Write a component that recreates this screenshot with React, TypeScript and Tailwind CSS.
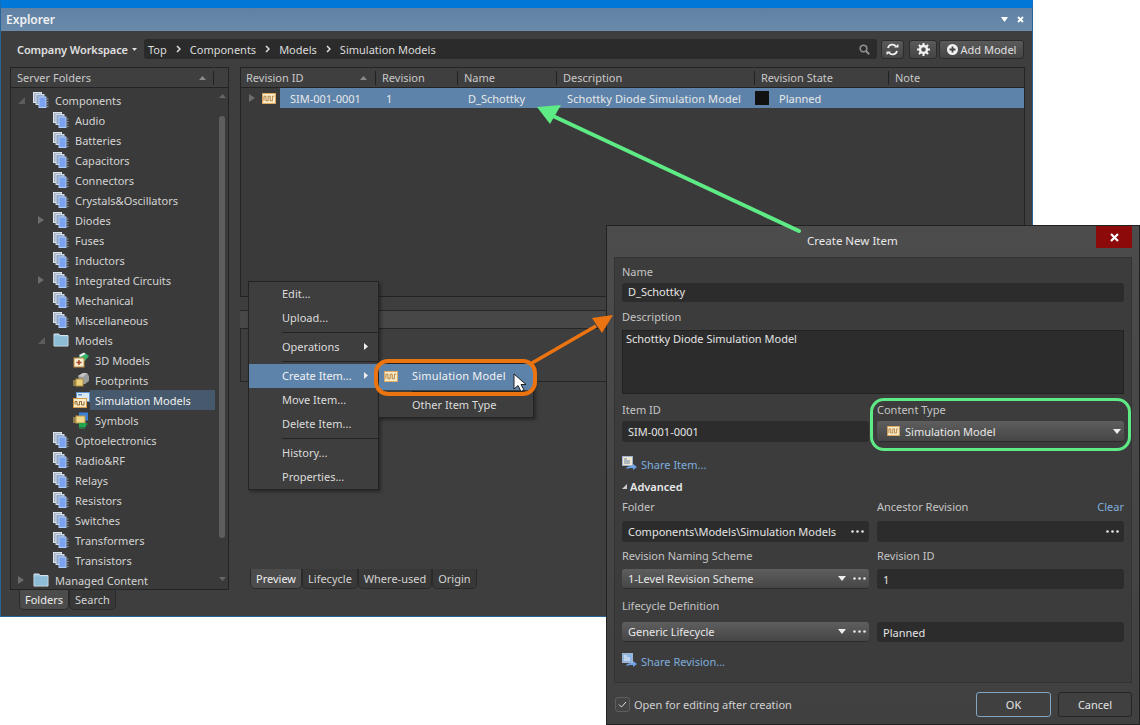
import React from "react";

const font = { fontFamily: '"Noto Sans", "Open Sans", sans-serif' };

function StackIcon() {
  return (
    <svg width="16" height="16" viewBox="0 0 16 16" className="shrink-0">
      <rect x="0.5" y="0.5" width="8" height="10" fill="#a9b6c6" stroke="#dfe6ee" strokeWidth="1" />
      <rect x="3" y="2.500" width="8" height="10" fill="#93a8c4" stroke="#d2dcea" strokeWidth="1" />
      <rect x="6" y="5" width="7" height="10.500" fill="#7aa2ee" stroke="#b4ccf5" strokeWidth="1" />
      <path d="M13.800 7h1.700M13.800 9.500h1.700M13.800 12h1.700M13.800 14.500h1.700" stroke="#8f9aa5" strokeWidth="1" />
    </svg>
  );
}

function FolderIcon() {
  return (
    <svg width="16" height="14" viewBox="0 0 16 14" className="shrink-0">
      <path d="M1 1h5l1 1.500h8V13H1z" fill="#9cc6dc" stroke="#d4e4ec" strokeWidth="1" />
      <rect x="1.500" y="3.500" width="13" height="9" fill="#8dbcd6" />
    </svg>
  );
}

function WaveIcon({ size = 15 }: { size?: number }) {
  return (
    <svg width={size} height={Math.round((size * 12) / 15)} viewBox="0 0 15 12" className="shrink-0">
      <rect x="0.5" y="0.5" width="14" height="11" fill="#f9ebc8" stroke="#e3ab5c" strokeWidth="1" />
      <path d="M2 8.500V3.500h2.200V8.500h2.400V3.500h2.200V8.500h2.400V3.500H13" fill="none" stroke="#a8702e" strokeWidth="0.9" />
    </svg>
  );
}

function ThreeDIcon() {
  return (
    <svg width="17" height="16" viewBox="0 0 17 16" className="shrink-0">
      <path d="M5 5l7-4 4 3-5 6z" fill="#35b56b" />
      <path d="M6 3l5-2.500 1.500 1.500-5 3z" fill="#e8f4ec" />
      <rect x="1" y="6" width="10" height="9" fill="#f6edd4" stroke="#c08a3c" strokeWidth="1" />
      <path d="M6 8v5M3.500 10.500h5" stroke="#a0431c" strokeWidth="1.400" />
    </svg>
  );
}

function FootprintIcon() {
  return (
    <svg width="17" height="16" viewBox="0 0 17 16" className="shrink-0">
      <path d="M5 4l5-3h4l2 3v5l-4 3H7z" fill="#9a9d9c" />
      <path d="M5 4l5-3h4l-4 4z" fill="#c4c7c6" />
      <rect x="3" y="7" width="7" height="7" fill="#e9cf7e" stroke="#b08e3a" strokeWidth="1" />
      <path d="M0 9h3M0 11h3M0 13h3" stroke="#e0b95c" strokeWidth="1" />
    </svg>
  );
}

function SimIcon() {
  return (
    <svg width="17" height="17" viewBox="0 0 17 17" className="shrink-0">
      <rect x="3.500" y="0.5" width="13" height="9" fill="#dbe9f6" stroke="#5f94cc" strokeWidth="1" />
      <rect x="5" y="2" width="4" height="1.500" fill="#5f94cc" />
      <rect x="0.5" y="6.500" width="13" height="9" fill="#f9ebc8" stroke="#d79a45" strokeWidth="1" />
      <path d="M2 12.500V9.500h2v3.500h2.500V9.500h2v3.500h2.500V9.500" fill="none" stroke="#8a5a25" strokeWidth="0.9" />
    </svg>
  );
}

function SymbolIcon() {
  return (
    <svg width="17" height="17" viewBox="0 0 17 17" className="shrink-0">
      <rect x="6" y="0.5" width="9" height="8" fill="#3b83d8" />
      <rect x="3" y="4" width="9" height="7" fill="#f0d98c" stroke="#b79a4a" strokeWidth="1" />
      <path d="M0 6h3M0 8h3M0 10h3" stroke="#e0b95c" strokeWidth="1" />
      <rect x="6" y="11" width="7" height="4" fill="#21a54f" />
      <path d="M7 15v2M9 15v2M11 15v2M13 12h2" stroke="#21a54f" strokeWidth="1" />
    </svg>
  );
}

function Tri({ open }: { open?: boolean }) {
  return open ? (
    <svg width="7" height="7" viewBox="0 0 7 7"><path d="M7 0v7H0z" fill="#5c5c5c" /></svg>
  ) : (
    <svg width="6" height="8" viewBox="0 0 6 8"><path d="M0 0l6 4-6 4z" fill="#6c6c6c" /></svg>
  );
}

type Row = { t: string; lvl: number; icon: React.ReactNode; arrow?: "open" | "closed"; sel?: boolean };

const s = <StackIcon />;
const rows: Row[] = [
  { t: "Components", lvl: 0, icon: s, arrow: "open" },
  { t: "Audio", lvl: 1, icon: s },
  { t: "Batteries", lvl: 1, icon: s },
  { t: "Capacitors", lvl: 1, icon: s },
  { t: "Connectors", lvl: 1, icon: s },
  { t: "Crystals&Oscillators", lvl: 1, icon: s },
  { t: "Diodes", lvl: 1, icon: s, arrow: "closed" },
  { t: "Fuses", lvl: 1, icon: s },
  { t: "Inductors", lvl: 1, icon: s },
  { t: "Integrated Circuits", lvl: 1, icon: s, arrow: "closed" },
  { t: "Mechanical", lvl: 1, icon: s },
  { t: "Miscellaneous", lvl: 1, icon: s },
  { t: "Models", lvl: 1, icon: <FolderIcon />, arrow: "open" },
  { t: "3D Models", lvl: 2, icon: <ThreeDIcon /> },
  { t: "Footprints", lvl: 2, icon: <FootprintIcon /> },
  { t: "Simulation Models", lvl: 2, icon: <SimIcon />, sel: true },
  { t: "Symbols", lvl: 2, icon: <SymbolIcon /> },
  { t: "Optoelectronics", lvl: 1, icon: s },
  { t: "Radio&RF", lvl: 1, icon: s },
  { t: "Relays", lvl: 1, icon: s },
  { t: "Resistors", lvl: 1, icon: s },
  { t: "Switches", lvl: 1, icon: s },
  { t: "Transformers", lvl: 1, icon: s },
  { t: "Transistors", lvl: 1, icon: s },
  { t: "Managed Content", lvl: 0, icon: <FolderIcon />, arrow: "closed" },
];

const indentClass = ["pl-[7px]", "pl-[27px]", "pl-[47px]"];

function TreeRow({ r }: { r: Row }) {
  return (
    <div className={`flex h-5 items-center ${indentClass[r.lvl]}`}>
      <span className="flex w-[15px] shrink-0 items-center">
        {r.arrow ? <Tri open={r.arrow === "open"} /> : null}
      </span>
      <span className="flex w-[17px] shrink-0 items-center justify-start">{r.icon}</span>
      <span
        className={`flex h-5 items-center whitespace-nowrap pl-[5px] pr-[24px] ${
          r.sel ? "bg-[#47596c] text-[#f0f0f0]" : "text-[#d4d4d4]"
        }`}
      >
        {r.t}
      </span>
    </div>
  );
}

function HeadCell({ w, t, sort }: { w: string; t: string; sort?: boolean }) {
  return (
    <div className={`flex h-[14px] items-center justify-between border-r border-[#222] pr-[8px] ${sort ? "pl-[5px]" : "pl-[6px]"} ${w}`}>
      <span>{t}</span>
      {sort ? (
        <svg width="7" height="4" viewBox="0 0 7 4"><path d="M0 4l3.500-4L7 4z" fill="#8a8a8a" /></svg>
      ) : null}
    </div>
  );
}

function Btn({ className, children }: { className: string; children: React.ReactNode }) {
  return (
    <div
      className={`flex h-[19px] items-center justify-center rounded-[3px] border border-[#2c2c2c] bg-gradient-to-b from-[#5a5a5a] to-[#454545] text-[#e0e0e0] ${className}`}
    >
      {children}
    </div>
  );
}

function Chevron() {
  return (
    <svg width="5" height="8" viewBox="0 0 5 8" className="mx-[9px] shrink-0">
      <path d="M1 1l3 3-3 3" fill="none" stroke="#e0e0e0" strokeWidth="1.500" />
    </svg>
  );
}

function Field({ children, className = "" }: { children?: React.ReactNode; className?: string }) {
  return (
    <div className={`flex items-center rounded-[3px] bg-[#2c2c2c] pl-[6px] pr-[6px] text-[#e4e4e4] ${className}`}>
      {children}
    </div>
  );
}

function Dots() {
  return (
    <svg width="13" height="3" viewBox="0 0 13 3" className="shrink-0">
      <circle cx="1.500" cy="1.500" r="1.300" fill="#e4e4e4" />
      <circle cx="6.500" cy="1.500" r="1.300" fill="#e4e4e4" />
      <circle cx="11.500" cy="1.500" r="1.300" fill="#e4e4e4" />
    </svg>
  );
}

function Caret() {
  return (
    <svg width="8" height="5" viewBox="0 0 8 5" className="shrink-0">
      <path d="M0 0h8L4 5z" fill="#eeeeee" />
    </svg>
  );
}

function Select({ children, dots, className = "h-[20px] pl-[6px]" }: { children: React.ReactNode; dots?: boolean; className?: string }) {
  return (
    <div className={`flex items-center rounded-[3px] border-b border-[#2c2c2c] bg-gradient-to-b from-[#5e5e5e] to-[#464646] pr-[3px] text-[#e8e8e8] ${className}`}>
      <div className="flex flex-1 items-center">{children}</div>
      <Caret />
      {dots ? <span className="ml-[7px] flex"><Dots /></span> : null}
    </div>
  );
}

function Label({ children }: { children: React.ReactNode }) {
  return <div className="flex h-[15px] items-center text-[#c4c4c4]">{children}</div>;
}

function ShareIcon({ alt }: { alt?: boolean }) {
  return (
    <svg width="16" height="15" viewBox="0 0 16 15" className="shrink-0">
      <rect x="0.5" y="0.5" width="10" height="9" fill={alt ? "#8fb4e6" : "#f0e8d0"} stroke="#9fb4cc" strokeWidth="1" />
      <path d="M2 3h3M2 5h6M2 7h6" stroke={alt ? "#f0f0f0" : "#6f86a8"} strokeWidth="1" />
      <path d="M4 13c1-3 4-3 7-3V8l4 3-4 3v-2c-3 0-5 0-7 1z" fill="#6fa3e6" />
    </svg>
  );
}

function Tabs({ items, className }: { items: string[]; className: string }) {
  return (
    <div className={`flex h-[20px] items-stretch ${className}`}>
      {items.map((t, i) => (
        <div
          key={t}
          className={`flex items-center rounded-b-[5px] border border-t-0 border-[#2a2a2a] px-[5px] ${
            i === 0 ? "bg-[#4c4c4c] text-[#eeeeee]" : "bg-[#383838] text-[#d4d4d4]"
          }`}
        >
          {t}
        </div>
      ))}
    </div>
  );
}

function MenuItem({ t, arrow, active }: { t: string; arrow?: boolean; active?: boolean }) {
  return (
    <div
      className={`flex h-6 items-center justify-between pb-[2px] pl-[33px] pr-[10px] ${
        active ? "bg-[#5d83aa] text-[#f2f2f2]" : "text-[#dcdcdc]"
      }`}
    >
      <span>{t}</span>
      {arrow ? (
        <svg width="4" height="7" viewBox="0 0 4 7"><path d="M0 0l4 3.500L0 7z" fill="#eeeeee" /></svg>
      ) : null}
    </div>
  );
}

function MenuSep() {
  return (
    <div className="flex h-[5px] items-center pl-[33px]">
      <div className="h-px flex-1 bg-[#232323]" />
    </div>
  );
}

export default function App() {
  return (
    <div className="relative h-[725px] w-[1140px] overflow-hidden bg-white text-[11px] leading-none" style={font}>
      {/* Explorer window */}
      <div className="flex h-[617px] w-[1033px] flex-col border-x border-b border-[#2a6496] border-t-[8px] border-t-[#0078d7] bg-[#3e3e3e]">
        <div className="flex h-[23px] shrink-0 items-center justify-between bg-gradient-to-b from-[#5f81a3] to-[#6a8aab] pl-[5px] pr-[8px]">
          <span className="text-[12px] font-semibold text-[#f2f2f2]">Explorer</span>
          <div className="flex items-center gap-[9px]">
            <svg width="7" height="5" viewBox="0 0 7 5"><path d="M0 0h7L3.500 5z" fill="#fff" /></svg>
            <svg width="7" height="7" viewBox="0 0 7 7"><path d="M1 1l5 5M6 1l-5 5" stroke="#fff" strokeWidth="1.800" /></svg>
          </div>
        </div>

        <div className="flex h-[36px] shrink-0 items-center pl-[16px] pr-[8px]">
          <span className="flex w-[127px] shrink-0 items-center gap-[4px] font-semibold tracking-[-0.1px] text-[#e0e0e0]">
            Company Workspace
            <svg width="5" height="3" viewBox="0 0 5 3"><path d="M0 0h5L2.500 3z" fill="#e0e0e0" /></svg>
          </span>
          <div className="flex h-[20px] w-[733px] shrink-0 items-center rounded-[3px] bg-[#2b2b2b] pl-[4px] pr-[7px] text-[#dcdcdc]">
            <span>Top</span>
            <Chevron />
            <span>Components</span>
            <Chevron />
            <span>Models</span>
            <Chevron />
            <span>Simulation Models</span>
            <svg width="11" height="11" viewBox="0 0 11 11" className="ml-auto">
              <circle cx="4.500" cy="4.500" r="3.300" fill="none" stroke="#8f8f8f" strokeWidth="1.600" />
              <path d="M7 7l3.200 3.200" stroke="#8f8f8f" strokeWidth="2" />
            </svg>
          </div>
          <Btn className="ml-[4px] w-[23px]">
            <svg width="13" height="13" viewBox="0 0 13 13">
              <path d="M2 5a4.500 4.500 0 0 1 8-1.500M11 8a4.500 4.500 0 0 1-8 1.500" fill="none" stroke="#f0f0f0" strokeWidth="1.800" />
              <path d="M8 4.500h4.500V1zM5 8.500H.5V12z" fill="#f0f0f0" />
            </svg>
          </Btn>
          <Btn className="ml-[5px] w-[28px]">
            <svg width="13" height="13" viewBox="0 0 13 13">
              <circle cx="6.500" cy="6.500" r="3.500" fill="none" stroke="#f4f4f4" strokeWidth="2.400" />
              <path d="M6.500 0v2.500M6.500 10.500V13M0 6.500h2.500M10.500 6.500H13M1.900 1.900l1.800 1.800M9.300 9.300l1.800 1.800M11.100 1.900 9.300 3.700M3.700 9.300l-1.800 1.800" stroke="#f4f4f4" strokeWidth="2" />
            </svg>
          </Btn>
          <Btn className="ml-[2px] w-[85px] gap-[3px]">
            <svg width="11" height="11" viewBox="0 0 11 11">
              <circle cx="5.500" cy="5.500" r="5.500" fill="#f2f2f2" />
              <path d="M5.500 2.500v6M2.500 5.500h6" stroke="#444" strokeWidth="1.800" />
            </svg>
            <span>Add Model</span>
          </Btn>
        </div>

        <div className="flex min-h-0 flex-1 pl-[9px]">
          {/* Left */}
          <div className="flex w-[219px] shrink-0 flex-col">
            <div className="flex h-[523px] flex-col border border-[#232323] bg-[#3a3a3a]">
              <div className="flex h-[20px] shrink-0 items-center justify-between border-b border-[#232323] bg-[#3f3f3f] pl-[6px] pr-[14px] text-[#c8c8c8]">
                <span>Server Folders</span>
                <div className="flex h-[14px] w-[15px] items-center justify-between">
                  <svg width="7" height="4" viewBox="0 0 7 4"><path d="M0 4l3.500-4L7 4z" fill="#8a8a8a" /></svg>
                  <span className="h-full w-px bg-[#222]" />
                </div>
              </div>
              <div className="flex min-h-0 flex-1">
                <div className="min-w-0 flex-1 overflow-hidden pt-[2px]">
                  {rows.map((r) => (
                    <TreeRow key={r.t} r={r} />
                  ))}
                </div>
                <div className="flex w-[11px] shrink-0 flex-col items-center pr-[1px] pt-[6px]">
                  <svg width="7" height="4" viewBox="0 0 7 4" className="shrink-0"><path d="M0 4l3.500-4L7 4z" fill="#666" /></svg>
                  <div className="mt-[18px] h-[422px] w-[6px] shrink-0 rounded-[3px] bg-[#5e5e5e]" />
                  <svg width="7" height="4" viewBox="0 0 7 4" className="mt-[39px] shrink-0"><path d="M0 0h7L3.500 4z" fill="#666" /></svg>
                </div>
              </div>
            </div>
            <Tabs items={["Folders", "Search"]} className="ml-[9px]" />
          </div>

          {/* Right */}
          <div className="ml-[11px] flex w-[785px] shrink-0 flex-col">
            <div className="h-[230px] shrink-0 border border-[#232323] bg-[#3a3a3a]">
              <div className="flex h-[20px] items-center border-b border-[#232323] bg-[#3f3f3f] text-[#c8c8c8]">
                <HeadCell w="w-[135px]" t="Revision ID" sort />
                <HeadCell w="w-[82px]" t="Revision" />
                <HeadCell w="w-[99px]" t="Name" />
                <HeadCell w="w-[198px]" t="Description" />
                <HeadCell w="w-[134px]" t="Revision State" />
                <div className="pl-[6px]">Note</div>
              </div>
              <div className="flex h-[20px] items-center text-[#e8e8e8]">
                <span className="flex w-[21px] shrink-0 justify-center pl-[1px]"><Tri /></span>
                <span className="flex w-[18px] shrink-0"><WaveIcon size={14} /></span>
                <div className="flex h-full flex-1 items-center bg-[#5d83aa]">
                  <span className="w-[106px] pl-[10px]">SIM-001-0001</span>
                  <span className="w-[82px]">1</span>
                  <span className="w-[99px]">D_Schottky</span>
                  <span className="w-[188px] tracking-[0.1px]">Schottky Diode Simulation Model</span>
                  <span className="h-[14px] w-[14px] bg-[#111]" />
                  <span className="ml-[10px]">Planned</span>
                </div>
              </div>
            </div>
            <div className="mt-[13px] flex h-[18px] shrink-0 border-t border-[#262626] bg-[#474747]" />
            <div className="h-[54px] shrink-0 border border-[#262626]" />
            <div className="flex-1" />
            <Tabs items={["Preview", "Lifecycle", "Where-used", "Origin"]} className="mb-[27px] ml-[10px]" />
          </div>
        </div>
      </div>

      {/* Context menu */}
      <div className="absolute left-[248px] top-[281px] w-[131px] border border-[#232323] bg-[#3e3e3e] shadow-[2px_2px_3px_rgba(0,0,0,0.35)]">
        <MenuItem t="Edit..." />
        <MenuItem t="Upload..." />
        <MenuSep />
        <MenuItem t="Operations" arrow />
        <MenuSep />
        <MenuItem t="Create Item..." arrow active />
        <MenuItem t="Move Item..." />
        <MenuItem t="Delete Item..." />
        <MenuSep />
        <MenuItem t="History..." />
        <MenuItem t="Properties..." />
      </div>

      {/* Submenu */}
      <div className="absolute left-[378px] top-[363px] w-[156px] border border-[#232323] bg-[#3e3e3e] shadow-[2px_2px_3px_rgba(0,0,0,0.35)]">
        <div className="flex h-[26px] items-center bg-[#5d83aa] pb-[2px] pl-[5px] text-[#f2f2f2]">
          <WaveIcon size={14} />
          <span className="ml-[14px] -mt-[2px] tracking-[0.2px]">Simulation Model</span>
        </div>
        <div className="flex h-[3px] items-center pl-[33px]">
          <div className="h-px flex-1 bg-[#232323]" />
        </div>
        <div className="flex h-[24px] items-center pb-[2px] pl-[33px] text-[#dcdcdc]">Other Item Type</div>
      </div>

      {/* Orange ring and cursor */}
      <div className="absolute left-[374px] top-[359px] h-[37px] w-[163px] rounded-[14px] border-4 border-[#ec7410]" />
      <svg width="14" height="20" viewBox="0 0 14 20" className="absolute left-[513px] top-[373px]">
        <path d="M1 1v15l4-3.500 3 6 3-1.500-3-5.500h5z" fill="#fff" stroke="#222" strokeWidth="1" />
      </svg>

      {/* Dialog */}
      <div className="absolute left-[606px] top-[225px] flex h-[500px] w-[534px] flex-col border border-[#222] bg-gradient-to-b from-[#4c4c4c] to-[#404040]">
        <div className="relative flex h-[31px] shrink-0 items-center pb-[1px] pl-[200px] text-[11.500px] text-[#e8e8e8]">
          <span>Create New Item</span>
          <div className="absolute right-[7px] top-0 flex h-[22px] w-[36px] items-center justify-center bg-[#8c0a0a]">
            <svg width="9" height="9" viewBox="0 0 9 9"><path d="M1 1l7 7M8 1l-7 7" stroke="#fff" strokeWidth="2.200" /></svg>
          </div>
        </div>
        <div className="mx-[7px] flex h-[426px] shrink-0 flex-col border border-[#333] bg-[#3c3c3c] px-[7px] pt-[6px]">
          <Label>Name</Label>
          <Field className="mt-[4px] h-[19px] pb-[3px]">D_Schottky</Field>
          <div className="mt-[7px]"><Label>Description</Label></div>
          <div className="mt-[6px] h-[64px] border border-[#222] bg-[#2c2c2c] pl-[3px] pt-[2px] text-[#e4e4e4]">
            Schottky Diode Simulation Model
          </div>
          <div className="mt-[8px] grid grid-cols-2 gap-x-[8px]">
            <div>
              <Label>Item ID</Label>
              <Field className="mt-[4px] h-[21px]">SIM-001-0001</Field>
            </div>
            <div>
              <Label>Content Type</Label>
              <div className="mt-[4px]">
                <Select className="h-[21px] pl-[10px]">
                  <WaveIcon size={13} />
                  <span className="ml-[5px]">Simulation Model</span>
                </Select>
              </div>
            </div>
          </div>
          <div className="mt-[14px] flex h-[15px] items-center">
            <ShareIcon />
            <span className="ml-[3px] mt-[2px] text-[#7eaedc]">Share Item...</span>
          </div>
          <div className="mt-[8px] flex h-[15px] items-center gap-[3px] font-semibold text-[#e8e8e8]">
            <svg width="5" height="5" viewBox="0 0 5 5"><path d="M5 0v5H0z" fill="#cccccc" /></svg>
            Advanced
          </div>
          <div className="mt-[5px] grid grid-cols-2 gap-x-[8px]">
            <div>
              <Label>Folder</Label>
              <Field className="mt-[7px] h-[21px] justify-between">
                <span>Components\Models\Simulation Models</span>
                <span className="-mr-[1px]"><Dots /></span>
              </Field>
            </div>
            <div>
              <div className="flex h-[15px] items-center justify-between text-[#c4c4c4]">
                <span>Ancestor Revision</span>
                <span className="text-[#7eaedc]">Clear</span>
              </div>
              <Field className="mt-[7px] h-[21px] justify-end"><span className="-mr-[1px]"><Dots /></span></Field>
            </div>
          </div>
          <div className="mt-[6px] grid grid-cols-2 gap-x-[8px]">
            <div>
              <Label>Revision Naming Scheme</Label>
              <div className="mt-[6px]">
                <Select dots><span>1-Level Revision Scheme</span></Select>
              </div>
            </div>
            <div>
              <Label>Revision ID</Label>
              <Field className="mt-[6px] h-[20px]">1</Field>
            </div>
          </div>
          <div className="mt-[9px] grid grid-cols-2 gap-x-[8px]">
            <div>
              <Label>Lifecycle Definition</Label>
              <div className="mt-[9px]">
                <Select dots><span>Generic Lifecycle</span></Select>
              </div>
            </div>
            <div>
              <div className="h-[15px]" />
              <Field className="mt-[9px] h-[20px]">Planned</Field>
            </div>
          </div>
          <div className="mt-[11px] flex h-[15px] items-center">
            <ShareIcon alt />
            <span className="ml-[3px] mt-[2px] text-[#7eaedc]">Share Revision...</span>
          </div>
        </div>
        <div className="flex flex-1 items-center justify-between pl-[8px] pr-[7px] pt-[2px]">
          <div className="flex items-center text-[#d0d0d0]">
            <div className="flex h-[15px] w-[15px] items-center justify-center rounded-[3px] border border-[#5e5e5e] bg-[#444]">
              <svg width="9" height="7" viewBox="0 0 9 7"><path d="M1 3.500l2.500 2.500L8 1" fill="none" stroke="#dddddd" strokeWidth="1" /></svg>
            </div>
            <span className="ml-[4px]">Open for editing after creation</span>
          </div>
          <div className="flex gap-[7px] text-[#e4e4e4]">
            <div className="flex h-[25px] w-[75px] items-center justify-center rounded-[3px] border border-[#7fa6c4] bg-[#404040]">OK</div>
            <div className="flex h-[25px] w-[74px] items-center justify-center rounded-[3px] border border-[#252525] bg-[#404040]">Cancel</div>
          </div>
        </div>
      </div>

      {/* Green ring */}
      <div className="absolute left-[870px] top-[398px] h-[53px] w-[261px] rounded-[14px] border-[3px] border-[#5eea85]" />

      {/* Arrows */}
      <svg width="1140" height="725" viewBox="0 0 1140 725" className="pointer-events-none absolute left-0 top-0">
        <path d="M799 231L553 116" stroke="#5eea85" strokeWidth="4" strokeLinecap="round" fill="none" />
        <path d="M537 107L561 105L550 124z" fill="#5eea85" />
        <path d="M532 363L596 326" stroke="#ec7410" strokeWidth="3.500" fill="none" />
        <path d="M613 315L592 318L602 333z" fill="#ec7410" />
      </svg>
    </div>
  );
}
